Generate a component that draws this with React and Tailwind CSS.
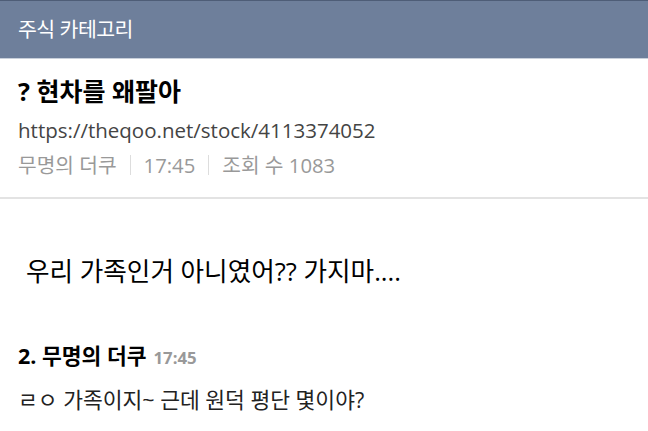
export default function App() {
  const font = { fontFamily: '"Open Sans", "Noto Sans CJK KR", sans-serif' };
  return (
    <div className="w-[648px] h-[431px] overflow-hidden bg-white" style={font}>
      {/* category bar */}
      <div className="h-[59px] bg-[#6e7f9b] border-t border-[#4e5d77] border-b border-b-[#c9d0db] flex items-center px-[18px]">
        <span className="text-white text-[20.5px] tracking-[-0.5px]">주식 카테고리</span>
      </div>

      {/* post header */}
      <div className="px-[18px] pt-[16px] pb-[18px] border-b-2 border-[#e3e3e3]">
        <h1 className="text-[25px] font-bold text-black leading-[32px]">? 현차를 왜팔아</h1>
        <p className="text-[20.5px] text-[#444] mt-[9px] leading-[28px]">https://theqoo.net/stock/4113374052</p>
        <div className="flex items-center text-[20.3px] text-[#999] mt-[7px] leading-[28px]">
          <span>무명의 더쿠</span>
          <span className="mx-[13px] w-px h-[20px] bg-[#ddd]" />
          <span>17:45</span>
          <span className="mx-[13px] w-px h-[20px] bg-[#ddd]" />
          <span>조회 수 1083</span>
        </div>
      </div>

      {/* body */}
      <div className="px-[26px] pt-[56px]">
        <p className="text-[25.6px] text-black leading-[34px]">우리 가족인거 아니였어?? 가지마....</p>
      </div>

      {/* comment */}
      <div className="px-[18px] pt-[54px]">
        <div className="flex items-baseline gap-[7px] leading-[26px]">
          <span className="text-[21.5px] font-bold text-black">2. 무명의 더쿠</span>
          <span className="text-[16.8px] font-bold text-[#999]">17:45</span>
        </div>
        <p className="text-[21.5px] text-[#222] mt-[15px] leading-[28px]">ㄹㅇ 가족이지~ 근데 원덕 평단 몇이야?</p>
      </div>
    </div>
  );
}
